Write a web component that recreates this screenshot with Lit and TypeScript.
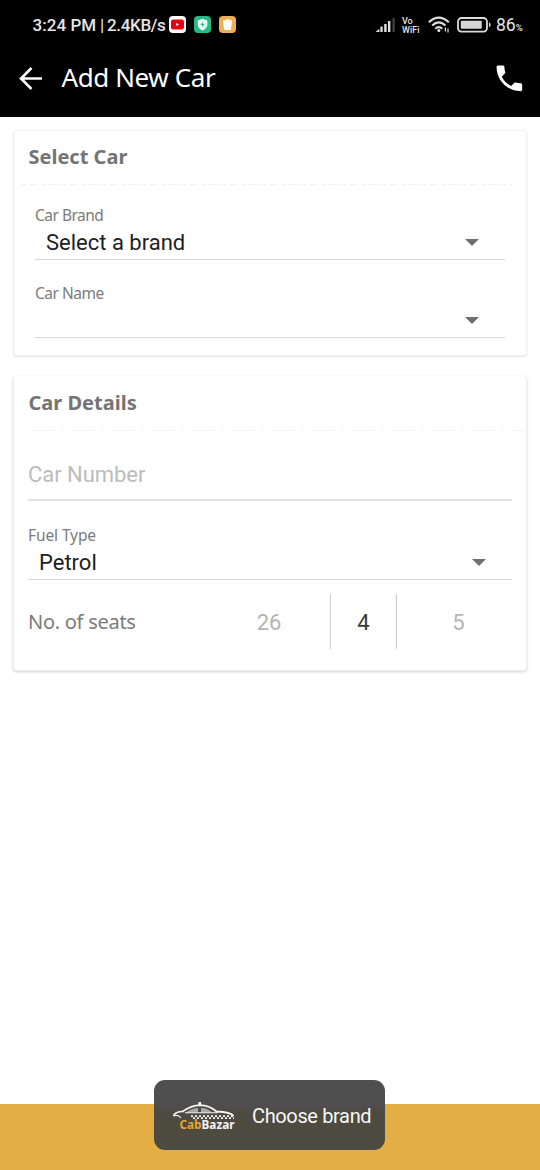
import { LitElement, html, css } from "lit";
import { customElement, property } from "lit/decorators.js";

@customElement("status-bar")
class StatusBar extends LitElement {
  static styles = css`
    :host { display: flex; justify-content: space-between; height: 50px; padding: 0 17px 0 32.5px; background: #000; color: #e6e6e6; font-family: Roboto, sans-serif; }
    .side { display: flex; align-items: center; height: 49px; }
    .time { font-size: 17px; font-weight: 500; white-space: pre; line-height: 50px; width: 136.5px; letter-spacing: 0.05px; }
    .bar { font-weight: 400; letter-spacing: -0.6px; }
    .rate { letter-spacing: -0.35px; }
    .apps { display: flex; gap: 8px; }
    svg { display: block; flex: none; }
    .signal { margin-right: 6px; }
    .vo { display: flex; flex-direction: column; gap: 1px; font-size: 9px; line-height: 8px; font-weight: 500; width: 26px; margin-top: 1px; }
    .vo span { display: block; height: 8px; }
    .wifi { margin-right: 7px; }
    .battery { margin-right: 5px; }
    .level { font-size: 17.5px; font-weight: 400; width: 27px; white-space: nowrap; line-height: 50px; margin-top: 3px; }
    .level span { font-size: 9.5px; font-weight: 500; }
  `;
  render() {
    return html`
      <div class="side">
        <div class="time"><span class="clock">3:24 PM</span><span class="bar"> | </span><span class="rate">2.4KB/s</span></div>
        <div class="apps">
          <svg width="17" height="17" viewBox="0 0 17 17">
            <rect width="17" height="17" rx="4" fill="#fff" />
            <rect x="2" y="3.600" width="13" height="9.800" rx="2.200" fill="#e60012" />
            <path d="M7.200 6.900v3.200l3-1.600z" fill="#fff" />
          </svg>
          <svg width="17" height="17" viewBox="0 0 17 17">
            <rect width="17" height="17" rx="4" fill="#25ba83" />
            <path d="M8.500 2.800l4.800 1.700v4c0 2.800-2 4.800-4.800 5.900-2.800-1.100-4.800-3.100-4.800-5.900v-4z" fill="#e8fff5" />
            <path d="M9.300 5.400L6.400 9h1.800l-.5 2.600L10.600 8H8.800z" fill="#25ba83" />
          </svg>
          <svg width="17" height="17" viewBox="0 0 17 17">
            <rect width="17" height="17" rx="4" fill="#eeb052" />
            <path d="M4 5.200h9l-1 7.800q-.1 1-1.100 1H6.100q-1 0-1.100-1z" fill="#fff" />
            <path d="M3.900 4.200h2.700l.7-1h2.400l.7 1h2.700v1.400H3.900z" fill="#fff" />
          </svg>
        </div>
      </div>
      <div class="side">
        <svg class="signal" width="21" height="16" viewBox="0 0 21 16" fill="#e0e0e0">
          <path d="M.6 15l3.800-3.200V15z" />
          <rect x="5.400" y="9.600" width="2.300" height="5.400" />
          <rect x="9.200" y="7" width="2.400" height="8" />
          <rect x="13" y="4" width="2.400" height="11" />
          <rect x="17.600" y="1" width="2" height="14" fill="#4a4a4a" />
        </svg>
        <div class="vo"><span>Vo</span><span>WiFi</span></div>
        <svg class="wifi" width="22" height="17" viewBox="0 0 22 17" fill="none" stroke="#e0e0e0" stroke-width="2">
          <path d="M.8 6.200Q10.800-3 20.800 6.200M4.200 9.500Q10.800 3.300 17.400 9.500M7.300 12.700Q10.800 9.600 14.300 12.700" />
          <circle cx="10.800" cy="14.600" r="1.500" fill="#e0e0e0" stroke="none" />
          <path d="M17.400 11.500v4M20 12.500v4" stroke-width="1.200" />
        </svg>
        <svg class="battery" width="34" height="16" viewBox="0 0 34 16">
          <rect x="1" y="1" width="29" height="13.600" rx="3.500" fill="none" stroke="#dcdcdc" stroke-width="1.800" />
          <rect x="3.800" y="3.800" width="21" height="8" rx="1" fill="#d5d5d5" />
          <path d="M32 5.400q1.600 0 1.600 2.300T32 10z" fill="#dcdcdc" />
        </svg>
        <div class="level">86<span>%</span></div>
      </div>
    `;
  }
}

@customElement("select-field")
class SelectField extends LitElement {
  @property() label = "";
  @property() value = "";
  static styles = css`
    :host { display: block; height: 55px; border-bottom: 1px solid #d8d8d8; letter-spacing: -0.5px; }
    .label { font: 400 15.5px/22px "Noto Sans", sans-serif; color: #7b7b7b; height: 24px; }
    .row { display: flex; align-items: center; justify-content: space-between; height: 31px; padding: 0 26px 0 11px; letter-spacing: 0; }
    .value { font: 400 22px/32px Roboto, sans-serif; color: #1e1e1e; white-space: pre; margin-bottom: 1px; }
    svg { display: block; margin-bottom: 3px; }
  `;
  render() {
    return html`
      <div class="label">${this.label}</div>
      <div class="row">
        <span class="value">${this.value}</span>
        <svg width="14" height="7" viewBox="0 0 14 7"><path d="M0 0h14L7 7z" fill="#707070" /></svg>
      </div>
    `;
  }
}

@customElement("seat-picker")
class SeatPicker extends LitElement {
  static styles = css`
    :host { display: grid; grid-template-columns: 179px 123px 67px 1fr; align-items: start; height: 55px; font: 400 22px/58px Roboto, sans-serif; color: #b4b4b4; text-align: center; }
    .label { font: 400 20px/55px "Noto Sans", sans-serif; letter-spacing: -0.27px; color: #7b7b7b; text-align: left; }
    .prev { padding-left: 1px; }
    .current { box-sizing: border-box; height: 55px; border: solid #cbcbcb; border-width: 0 1px; color: #3a3a3a; }
    .next { padding-left: 8px; }
  `;
  render() {
    return html`
      <div class="label">No. of seats</div>
      <div class="prev">26</div>
      <div class="current">4</div>
      <div class="next">5</div>
    `;
  }
}

@customElement("app-root")
class AppRoot extends LitElement {
  static styles = css`
    :host { display: flex; flex-direction: column; position: relative; height: 1170px; background: #fff; overflow: hidden; }
    .appbar { display: flex; align-items: center; height: 67px; box-sizing: border-box; padding: 0 17px 11px 19px; background: #000; }
    .appbar svg { display: block; }
    .title { flex: 1; margin: 0 0 2px 18.5px; font: 400 26px/40px "Noto Sans", sans-serif; letter-spacing: -0.4px; color: #fff; white-space: nowrap; }
    .content { flex: 1; padding: 13px 13px 0; }
    .card { box-sizing: border-box; border: 1px solid #efefef; border-top-color: #f4f4f4; border-radius: 4px; background: #fff; box-shadow: 0 1px 2px rgba(0,0,0,.1); }
    .brand { height: 226px; margin-bottom: 20px; }
    .details { height: 295px; border-top-color: #fefefe; box-shadow: 0 1px 3px rgba(0,0,0,.18); }
    .heading { height: 53px; padding-left: 14.5px; font: 700 20px/51px "Noto Sans", sans-serif; color: #747474; }
    .dash { display: block; margin: 0 0 0 7px; }
    .brand .fields { display: flex; flex-direction: column; gap: 22px; padding: 18px 21px 0; }
    .details .fields { padding: 0 14px; }
    .number { height: 67px; border-bottom: 2px solid #e4e4e4; font: 400 22px/85px Roboto, sans-serif; letter-spacing: -0.05px; color: #bcbcbc; }
    .fuel { margin-top: 23px; letter-spacing: -0.1px; }
    .seats { margin-top: 14px; }
    .action { height: 66px; background: #e3ae43; }
    .toast { position: absolute; left: 154px; top: 1080px; width: 231px; height: 70px; box-sizing: border-box; padding: 0 0 0 18px; display: flex; align-items: center; border-radius: 11px; background: linear-gradient(#4f4f4f 0 24px, #4d4a41 32px, #4e4b40); }
    .logo { display: block; margin: 2px 16px 0 0; }
    .cab { font: 700 12.5px "Noto Sans", sans-serif; }
    .message { margin-top: 2px; font: 400 20px/28px Roboto, sans-serif; letter-spacing: -0.36px; color: #f7f7f7; white-space: nowrap; }
  `;
  render() {
    return html`
      <status-bar></status-bar>
      <div class="appbar">
        <svg width="24" height="24" viewBox="0 0 24 24" fill="none" stroke="#fff" stroke-width="2.600"><path d="M23 12.500H2.500M12.500 2L2 12.500 12.500 23" /></svg>
        <div class="title">Add New Car</div>
        <svg width="27" height="27" viewBox="2.600 2.600 19 19" fill="#fff"><path d="M6.620 10.790c1.440 2.830 3.760 5.140 6.590 6.590l2.200-2.200c.27-.27.67-.36 1.020-.24 1.120.37 2.330.57 3.570.57.55 0 1 .45 1 1V20c0 .55-.45 1-1 1-9.390 0-17-7.610-17-17 0-.55.45-1 1-1h3.500c.55 0 1 .45 1 1 0 1.250.2 2.450.57 3.570.11.35.03.74-.25 1.020z" /></svg>
      </div>
      <div class="content">
        <div class="card brand">
          <div class="heading">Select Car</div>
          <svg class="dash" width="492" height="2"><line x1="0" x2="492" y1="0.500" y2="0.500" stroke="#f3f3f3" stroke-dasharray="5 3 8 4" /></svg>
          <div class="fields">
            <select-field label="Car Brand" value="Select a brand"></select-field>
            <select-field label="Car Name"></select-field>
          </div>
        </div>
        <div class="card details">
          <div class="heading">Car Details</div>
          <svg class="dash" width="504" height="2"><line x1="10" x2="504" y1="0.500" y2="0.500" stroke="#f3f3f3" stroke-dasharray="24 6 4 6" /></svg>
          <div class="fields">
            <div class="number">Car Number</div>
            <select-field class="fuel" label="Fuel Type" value="Petrol"></select-field>
            <seat-picker class="seats"></seat-picker>
          </div>
        </div>
      </div>
      <div class="action"></div>
      <div class="toast">
        <svg class="logo" width="64" height="30" viewBox="0 0 64 30">
          <path d="M1.500 15Q3 10.500 11 10.300Q19 4.500 28 4.200Q37 4.200 44.500 10.500Q59 11 61.500 15" fill="none" stroke="#f5f5f5" stroke-width="1.800" />
          <path d="M14 11.500Q20 7.200 26 7v4.500zM29 7q7 0 11 4.500H29z" fill="#f5f5f5" opacity=".55" />
          <path d="M13 11.700H46M1.500 15Q6 13 9 17" fill="none" stroke="#f5f5f5" stroke-width="1.100" />
          <rect x="26.500" y="1" width="2.600" height="3.500" fill="#f5f5f5" />
          <path d="M19 15.200H62M21 17.200H62" stroke="#f5f5f5" stroke-width="1.800" stroke-dasharray="2 2" />
          <text class="cab" x="7.500" y="27.500" textLength="55" lengthAdjust="spacingAndGlyphs" fill="#f4f4f4"><tspan fill="#e5a52f">Cab</tspan>Bazar</text>
        </svg>
        <span class="message">Choose brand</span>
      </div>
    `;
  }
}
